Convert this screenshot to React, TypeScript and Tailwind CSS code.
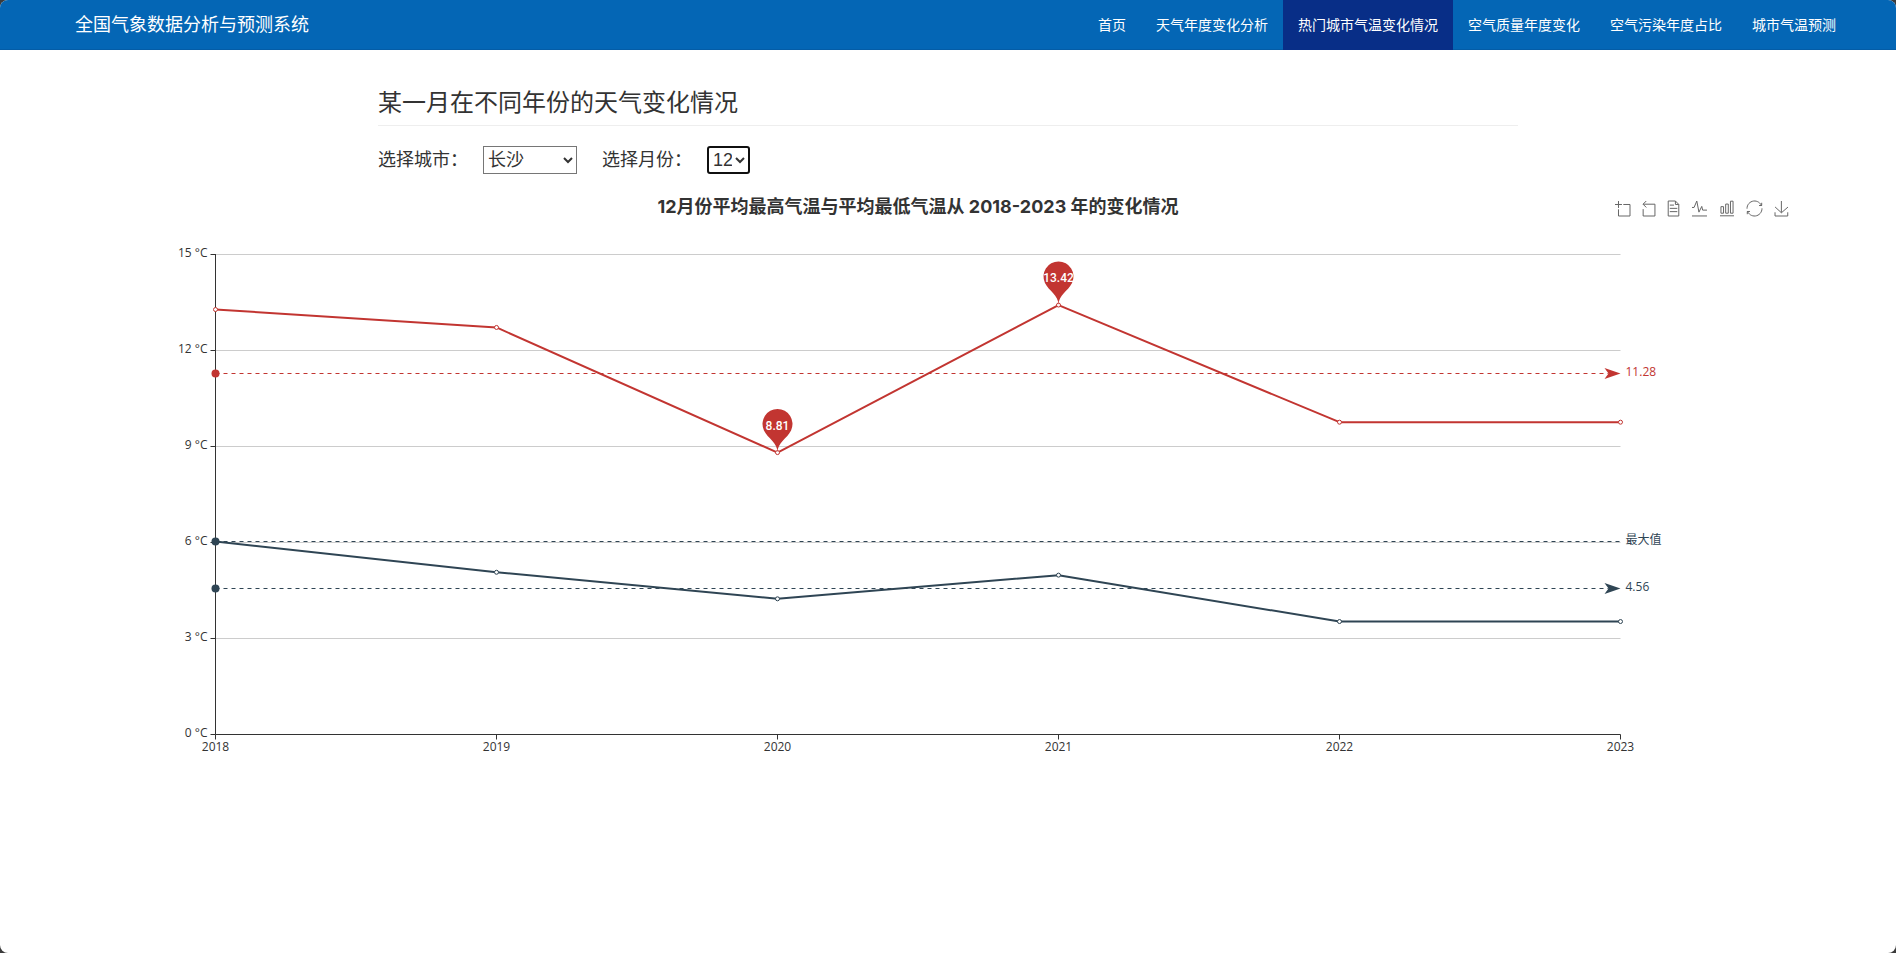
import { useState } from "react";

const NAV = [
  "首页",
  "天气年度变化分析",
  "热门城市气温变化情况",
  "空气质量年度变化",
  "空气污染年度占比",
  "城市气温预测",
];

const YEARS = [2018, 2019, 2020, 2021, 2022, 2023];
const HIGH = [13.28, 12.72, 8.81, 13.42, 9.76, 9.76];
const LOW = [6.03, 5.07, 4.24, 4.98, 3.53, 3.53];
const RED = "#c23531";
const NAVY = "#2f4554";

const LEFT = 175.5;
const RIGHT = 1580.5;
const BASE = 540.5;
const xAt = (i: number) => LEFT + i * 281;
const yAt = (v: number) => BASE - v * 32;
const crisp = (v: number) => Math.floor(yAt(v)) + 0.5;

const TOOLS = [
  { name: "区域缩放", size: "w-[15px]", box: "0 0 58 58", d: "M0,13.5h26.9 M13.5,26.9V0 M32.1,13.5H58V58H13.5 V32.1" },
  { name: "区域缩放还原", size: "w-[12px]", box: "9.9 1.4 45 56.7", d: "M22,1.4L9.9,13.5l12.3,12.3 M10.3,13.5H54.9v44.6 H10.3v-26" },
  { name: "数据视图", size: "w-[11px]", box: "11.5 2 39.5 56", d: "M17.5,17.3H33 M45.4,29.5h-28 M11.5,2v56H51V14.8L38.4,2H11.5z M38.4,2.2v12.7H51 M45.4,41.7h-28" },
  { name: "切换为折线图", size: "w-[15px]", box: "4.1 6.9 51.4 51.1", d: "M4.1,28.9h7.1l9.3-22l7.4,38l9.7-19.7l3,12.8h14.9M4.1,58h51.4" },
  { name: "切换为柱状图", size: "w-[14px]", box: "3.1 2 53.7 56", d: "M6.7,22.9h10V48h-10V22.9zM24.9,13h10v35h-10V13zM43.2,2h10v46h-10V2zM3.1,58h53.7" },
  { name: "还原", size: "w-[15px]", box: "2.1 2 55.8 56", d: "M47,18.9h9.8V8.7 M56.3,20.1 C52.1,9,40.5,0.6,26.8,2.1C12.6,3.7,1.6,16.2,2.1,30.6 M13,41.1H3.1v10.2 M3.7,39.9c4.2,11.1,15.8,19.5,29.5,18 c14.2-1.6,25.2-14.1,24.7-28.5" },
  { name: "保存为图片", size: "w-[13px]", box: "4.6 0 50.1 58", d: "M4.7,22.9L29.3,45.5L54.7,23.4M4.6,43.6L4.6,58L53.8,58L53.8,43.6M29.2,45.1L29.2,0" },
];

function Series({ data, color }: { data: number[]; color: string }) {
  return (
    <g>
      <polyline
        points={data.map((v, i) => `${xAt(i)},${yAt(v)}`).join(" ")}
        fill="none"
        stroke={color}
        strokeWidth={2}
        strokeLinejoin="bevel"
      />
      {data.map((v, i) => (
        <circle key={i} cx={xAt(i)} cy={yAt(v)} r={2} fill="#fff" stroke={color} />
      ))}
    </g>
  );
}

function MarkLine({ value, label, color, arrow }: { value: number; label: string; color: string; arrow: boolean }) {
  const y = crisp(value);
  return (
    <g>
      <line x1={LEFT} x2={arrow ? RIGHT - 12 : RIGHT} y1={y} y2={y} stroke={color} strokeDasharray="4 4" />
      <circle cx={LEFT} cy={y} r={4} fill={color} />
      {arrow && (
        <path d={`M${RIGHT} ${y}l-16 -5.4l4 5.4l-4 5.4z`} fill={color} />
      )}
      <text x={RIGHT + 5} y={y + 2} fill={color} fontSize={12}>
        {label}
      </text>
    </g>
  );
}

function Pin({ index, value }: { index: number; value: number }) {
  const x = xAt(index);
  const y = yAt(value);
  return (
    <g>
      <path
        transform={`translate(${x} ${y})`}
        d="M-13.55,-22.14A15,15 0 1 1 13.55,-22.14C9.69,-14.01 0,-10.5 0,0C0,-10.5 -9.69,-14.01 -13.55,-22.14Z"
        fill={RED}
      />
      <text x={x} y={y - 23} textAnchor="middle" fill="#fff" fontSize={12} fontWeight={500} className="font-['Roboto',sans-serif]">
        {value}
      </text>
    </g>
  );
}

function Chart({ month }: { month: string }) {
  return (
    <section className="relative mt-5 pr-[100px] pl-10">
      <svg
        viewBox="0 0 1756 600"
        className="block w-full font-['Open_Sans','Noto_Sans_CJK_SC',sans-serif]"
        role="img"
        aria-label="气温变化折线图"
      >
        <text
          x={878}
          y={19}
          textAnchor="middle"
          fontSize={18}
          fontWeight={700}
          fill="#333"
          className="font-['Inter','Noto_Sans_CJK_SC',sans-serif]"
        >
          {`${month}月份平均最高气温与平均最低气温从 2018-2023 年的变化情况`}
        </text>
        {[0, 3, 6, 9, 12, 15].map((v) => (
          <g key={v}>
            {v > 0 && <line x1={LEFT} x2={RIGHT} y1={yAt(v)} y2={yAt(v)} stroke="#ccc" />}
            <line x1={LEFT - 5} x2={LEFT} y1={yAt(v)} y2={yAt(v)} stroke="#333" />
            <text x={LEFT - 8} y={yAt(v) + 2} textAnchor="end" fontSize={12} fill="#333">
              {`${v} °C`}
            </text>
          </g>
        ))}
        <line x1={LEFT} x2={LEFT} y1={60} y2={BASE} stroke="#333" />
        <line x1={LEFT} x2={RIGHT} y1={BASE} y2={BASE} stroke="#333" />
        {YEARS.map((year, i) => (
          <g key={year}>
            <line x1={xAt(i)} x2={xAt(i)} y1={BASE} y2={BASE + 5} stroke="#333" />
            <text x={xAt(i)} y={BASE + 16} textAnchor="middle" fontSize={12} fill="#333">
              {year}
            </text>
          </g>
        ))}
        <Series data={HIGH} color={RED} />
        <Series data={LOW} color={NAVY} />
        <Pin index={3} value={13.42} />
        <Pin index={2} value={8.81} />
        <MarkLine value={11.28} label="11.28" color={RED} arrow />
        <MarkLine value={6.03} label="最大值" color={NAVY} arrow={false} />
        <MarkLine value={4.56} label="4.56" color={NAVY} arrow />
      </svg>
      <div className="absolute top-[7px] right-[108px] flex gap-[13px]">
        {TOOLS.map((t) => (
          <button key={t.name} type="button" aria-label={t.name} className="block cursor-pointer">
            <svg viewBox={t.box} className={`${t.size} block h-[15px] overflow-visible`} fill="none" stroke="#666">
              <path d={t.d} vectorEffect="non-scaling-stroke" />
            </svg>
          </button>
        ))}
      </div>
    </section>
  );
}

export default function App() {
  const [city, setCity] = useState("长沙");
  const [month, setMonth] = useState("12");
  return (
    <div className="min-h-screen bg-[#3b3b3b] font-['Liberation_Sans','Noto_Sans_CJK_SC',sans-serif] text-[#333]">
      <div className="min-h-screen overflow-hidden rounded-lg bg-white">
        <header className="flex h-[50px] items-stretch justify-between border-b border-[#045ca6] bg-[#0466b5] pr-[45px] pl-[75px] text-white">
          <a href="#" className="flex items-center text-lg">
            全国气象数据分析与预测系统
          </a>
          <nav className="flex text-sm">
            {NAV.map((item, i) => (
              <a
                key={item}
                href="#"
                aria-current={i === 2 ? "page" : undefined}
                className={`flex items-center px-[15px] ${i === 2 ? "-mb-px bg-[#082e87]" : ""}`}
              >
                {item}
              </a>
            ))}
          </nav>
        </header>
        <main>
          <div className="mx-auto max-w-[1170px] px-[15px] pt-[37px]">
            <h1 className="border-b border-[#eee] pb-1.5 text-2xl leading-8">某一月在不同年份的天气变化情况</h1>
            <div className="mt-5 flex h-7 items-center text-lg">
              <label htmlFor="city">选择城市：</label>
              <select
                id="city"
                value={city}
                onChange={(e) => setCity(e.target.value)}
                className="ml-[15px] h-7 w-[94px] border border-[#767676] bg-white"
              >
                <option>长沙</option>
                <option>北京</option>
                <option>上海</option>
                <option>广州</option>
              </select>
              <label htmlFor="month" className="ml-[25px]">
                选择月份：
              </label>
              <select
                id="month"
                value={month}
                onChange={(e) => setMonth(e.target.value)}
                className="ml-[15px] h-7 w-[43px] rounded-[3px] border-2 border-[#101010] bg-white"
              >
                {Array.from({ length: 12 }, (_, i) => (
                  <option key={i}>{i + 1}</option>
                ))}
              </select>
            </div>
          </div>
          <Chart month={month} />
        </main>
      </div>
    </div>
  );
}
